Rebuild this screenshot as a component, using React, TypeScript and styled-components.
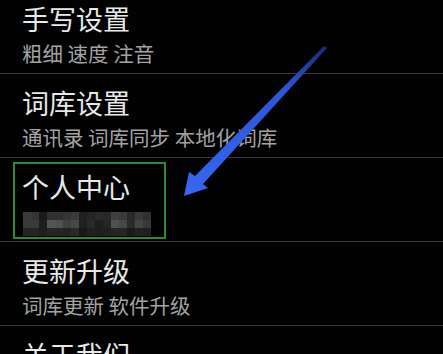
import * as React from 'react';
import styled, { createGlobalStyle } from 'styled-components';

const GlobalStyle = createGlobalStyle`
  html, body {
    margin: 0;
    padding: 0;
    background: #000;
  }
`;

const Screen = styled.div`
  position: relative;
  width: 443px;
  height: 354px;
  overflow: hidden;
  background: #020202;
  font-family: "Noto Sans CJK SC", "Noto Sans", sans-serif;
`;

const List = styled.div`
  display: flex;
  flex-direction: column;
  margin-top: -10px;
`;

const Row = styled.div`
  position: relative;
  display: flex;
  flex-direction: column;
  height: 84px;
  padding: 13px 0 0 22px;
  box-sizing: border-box;
  border-bottom: 1px solid #383838;
`;

const Title = styled.div`
  color: #e8e8e8;
  font-size: 27px;
  line-height: 32px;
  white-space: nowrap;
`;

const Subtitle = styled.div`
  margin-top: 6px;
  color: #a2a2a2;
  font-size: 20.5px;
  line-height: 24px;
  white-space: nowrap;
`;

const Mosaic = styled.div`
  display: grid;
  grid-template-columns: repeat(16, 8px);
  grid-auto-rows: 8px;
  margin: 9px 0 0 1px;
  width: 128px;
`;

const Cell = styled.div<{ $shade: number }>`
  background: ${({ $shade }) => `rgb(${$shade}, ${$shade}, ${$shade})`};
`;

const Highlight = styled.div`
  position: absolute;
  left: 13px;
  top: 4px;
  width: 153px;
  height: 77px;
  box-sizing: border-box;
  border: 2px solid #2f8a32;
  pointer-events: none;
`;

const ArrowLayer = styled.svg`
  position: absolute;
  left: 0;
  top: 0;
  pointer-events: none;
`;

const mosaicShades = [
  [58, 53, 26, 48, 48, 53, 58, 32, 37, 42, 40, 64, 58, 42, 58, 48],
  [58, 58, 30, 85, 80, 64, 72, 32, 42, 30, 37, 80, 72, 42, 69, 56],
  [37, 37, 30, 37, 37, 34, 42, 24, 32, 30, 32, 37, 37, 26, 34, 32],
];

const items = [
  { title: '手写设置', sub: '粗细 速度 注音' },
  { title: '词库设置', sub: '通讯录 词库同步 本地化词库' },
  { title: '个人中心', sub: null },
  { title: '更新升级', sub: '词库更新 软件升级' },
  { title: '关于我们', sub: '版本信息' },
];

const Arrow: React.FC = () => (
  <ArrowLayer width="443" height="354" viewBox="0 0 443 354">
    <defs>
      <linearGradient id="arrowFill" x1="325" y1="47" x2="190" y2="190" gradientUnits="userSpaceOnUse">
        <stop offset="0" stopColor="#1a2a7a" />
        <stop offset="0.3" stopColor="#2c55d8" />
        <stop offset="1" stopColor="#3566f0" />
      </linearGradient>
    </defs>
    <polygon
      points="324,46 195,176 189,172 184,196 208,188 203,184 327,48"
      fill="url(#arrowFill)"
    />
  </ArrowLayer>
);

export default function App() {
  return (
    <>
      <GlobalStyle />
      <Screen>
        <List>
          {items.map((item) => (
            <Row key={item.title}>
              <Title>{item.title}</Title>
              {item.sub ? (
                <Subtitle>{item.sub}</Subtitle>
              ) : (
                <>
                  <Mosaic>
                    {mosaicShades.flat().map((s, i) => (
                      <Cell key={i} $shade={s} />
                    ))}
                  </Mosaic>
                  <Highlight />
                </>
              )}
            </Row>
          ))}
        </List>
        <Arrow />
      </Screen>
    </>
  );
}
